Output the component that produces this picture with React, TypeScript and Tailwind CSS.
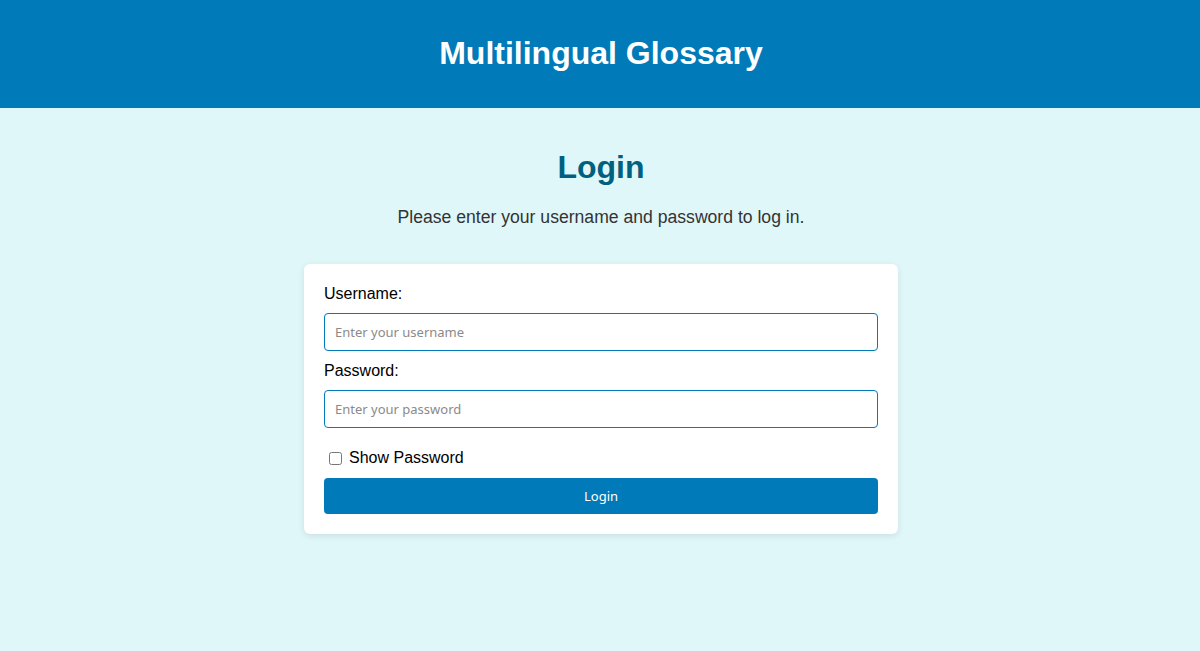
import React, { useState } from 'react'

export default function App() {
  const [showPassword, setShowPassword] = useState(false)
  const [username, setUsername] = useState('')
  const [password, setPassword] = useState('')

  return (
    <div className="min-h-[651px] bg-[#e0f7fa] font-['Liberation_Sans',Arial,sans-serif]">
      {/* Header */}
      <header className="bg-[#007ab8] h-[108px] flex items-center justify-center pl-[2px]">
        <h1 className="text-white text-[32px] font-bold leading-[40px] mt-[-2px]">Multilingual Glossary</h1>
      </header>

      <main className="flex flex-col items-center pt-[39px] pl-[2px]">
        <h2 className="text-[#006080] text-[32px] font-bold leading-[40px]">Login</h2>
        <p className="mt-[18px] text-[17.6px] leading-6 text-[#333333]">
          Please enter your username and password to log in.
        </p>

        {/* Login card */}
        <form
          className="mt-[35px] w-[594px] bg-white rounded-md shadow-[0_2px_6px_rgba(0,0,0,0.1)] p-5"
          onSubmit={(e) => e.preventDefault()}
        >
          <label htmlFor="username" className="block pt-px text-base leading-[18px] text-black mb-[10px]">
            Username:
          </label>
          <input
            id="username"
            type="text"
            value={username}
            onChange={(e) => setUsername(e.target.value)}
            placeholder="Enter your username"
            className="block w-full h-[38px] px-[10px] border border-[#007ab8] rounded-[4px] bg-white font-['Noto_Sans',sans-serif] text-[13px] text-black placeholder:text-[#8a8a8a] outline-none"
          />

          <label htmlFor="password" className="block mt-[10px] pt-px text-base leading-[18px] text-black mb-[10px]">
            Password:
          </label>
          <input
            id="password"
            type={showPassword ? 'text' : 'password'}
            value={password}
            onChange={(e) => setPassword(e.target.value)}
            placeholder="Enter your password"
            className="block w-full h-[38px] px-[10px] border border-[#007ab8] rounded-[4px] bg-white font-['Noto_Sans',sans-serif] text-[13px] text-black placeholder:text-[#8a8a8a] outline-none"
          />

          <div className="mt-[21px] flex items-center h-[18px]">
            <input
              id="show"
              type="checkbox"
              checked={showPassword}
              onChange={() => setShowPassword(!showPassword)}
              className="ml-[5px] w-[13px] h-[13px]"
            />
            <label htmlFor="show" className="ml-[7px] text-base leading-[18px] text-black">
              Show Password
            </label>
          </div>

          <button
            type="submit"
            className="mt-[11px] w-full h-9 pt-[2px] bg-[#007ab8] text-white rounded-[4px] font-['Noto_Sans',sans-serif] text-[13px]"
          >
            Login
          </button>
        </form>
      </main>
    </div>
  )
}
